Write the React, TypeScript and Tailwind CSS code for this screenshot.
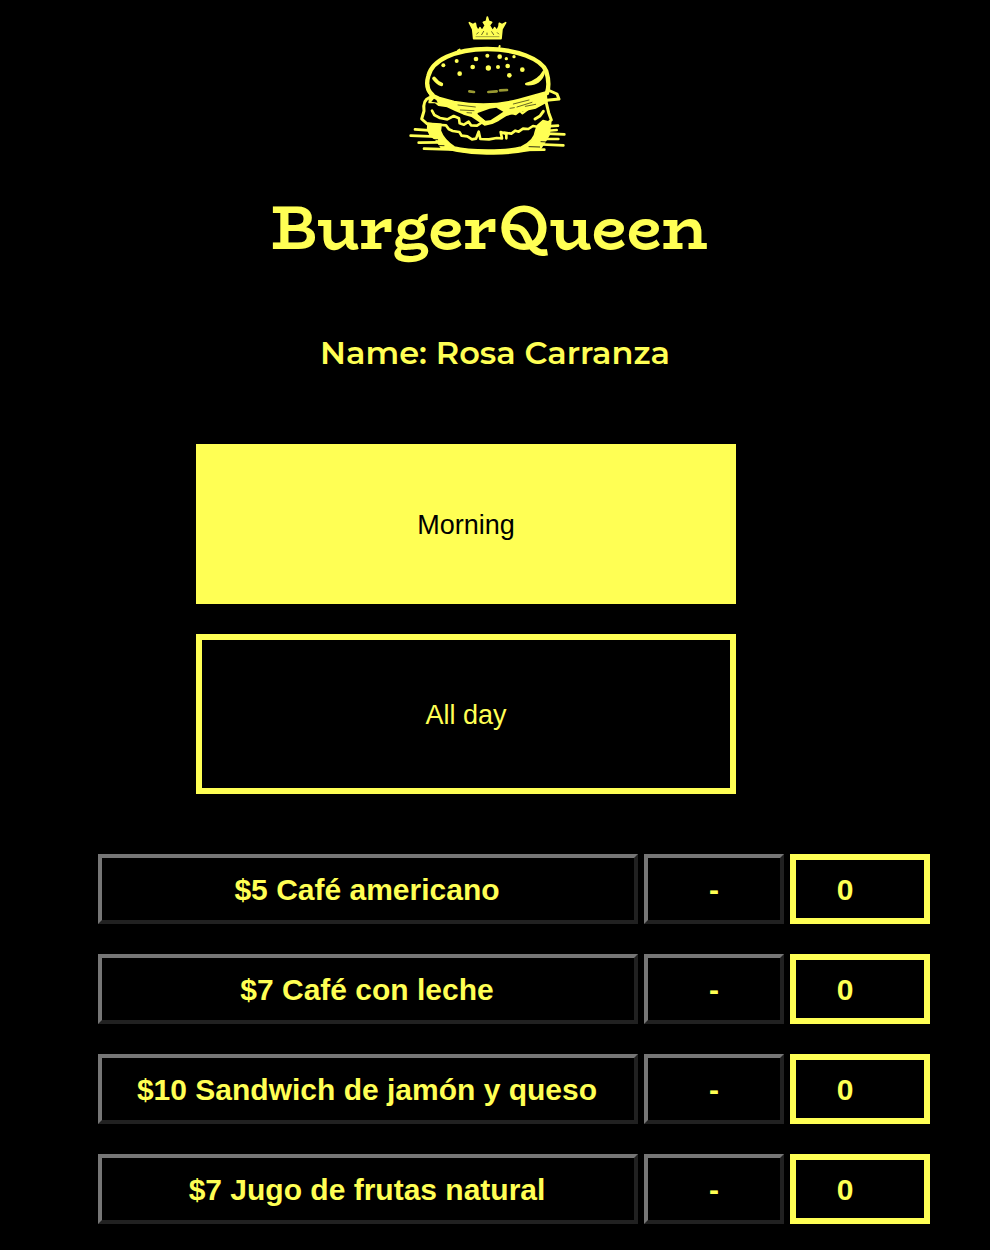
import { useState } from "react";

type Menu = "morning" | "allDay";

const products = [
  "$5 Café americano",
  "$7 Café con leche",
  "$10 Sandwich de jamón y queso",
  "$7 Jugo de frutas natural",
];

const seeds = [
  [133, 181, 6], [173, 168, 6], [182, 206, 7], [231, 162, 7], [221, 186, 7], [265, 152, 6],
  [268, 189, 8], [297, 186, 6], [302, 155, 7], [322, 161, 5], [326, 183, 7], [331, 211, 7],
  [345, 155, 5], [370, 194, 7],
];

function BurgerLogo() {
  return (
    <svg
      viewBox="0 0 540 480"
      role="img"
      aria-label="Burger with a crown"
      className="h-40 w-[180px] text-[#ffff54]"
      fill="none"
      stroke="currentColor"
      strokeLinecap="round"
      strokeLinejoin="round"
    >
      {/* crown */}
      <path
        d="M224 101 L221 72 L211 53 L222 59 L229 55 L231 66 L237 77 L243 68 L249 78 L259 61 L253 52 L262 49 L265 36 L269 49 L278 52 L271 61 L281 78 L287 68 L294 77 L300 64 L301 55 L309 59 L320 53 L309 72 L306 101 Z"
        fill="currentColor"
        strokeWidth="5"
      />
      <path d="M233 87 L238 83 M248 89 L254 79 M264 84 V89 M278 80 L284 89 M295 83 L299 87" stroke="#000" strokeWidth="3" opacity=".6" />
      <path d="M231 95 H300" stroke="#77772a" strokeWidth="2" />

      {/* top bun */}
      <path
        d="M100 269 C84 256 81 237 88 213 C99 166 166 133 264 132 C352 132 427 162 442 199 C450 226 450 246 444 264"
        strokeWidth="13"
      />
      <path d="M177 137 L182 134 M301 127 L302 123" strokeWidth="6" />
      <path d="M86 239 C86 253 92 266 102 273" strokeWidth="10" />
      <path d="M105 220 C112 229 118 235 127 238" strokeWidth="11" />
      <path d="M382 237 C410 239 430 226 435 199 C426 216 410 230 382 237 Z" fill="currentColor" strokeWidth="8" />
      <g fill="currentColor" stroke="none">
        {seeds.map(([x, y, r]) => (
          <ellipse key={`${x}-${y}`} cx={x} cy={y} rx={r} ry={r} />
        ))}
      </g>
      <path d="M211 259 L225 261 M268 261 L293 259 M303 256 L324 255" strokeWidth="8" opacity=".6" />

      {/* cheese under the bun */}
      <path
        d="M95 266 L121 278 L165 290 C234 302 302 300 359 284 L440 262 L443 290 L410 308 L381 314 L356 320 L322 330 L298 345 L279 354 L257 359 L238 346 L218 333 L194 326 L169 315 L145 304 L119 300 L108 291 L91 292 Z"
        fill="currentColor"
        strokeWidth="6"
      />
      <path d="M236 324 L272 311 L292 308 L313 320 L295 332 L274 346 L259 347 L235 330 Z" fill="#000" stroke="none" />
      <path d="M105 281 L112 285 L116 293 L97 290 Z" fill="#000" stroke="none" />
      <path d="M177 300 L229 306 M184 315 L225 317 M204 323 L218 324 M343 297 L390 285 M354 306 L399 292 M333 310 L346 308 M379 304 L410 298" stroke="#000" strokeWidth="3" opacity=".6" />
      <path d="M447 255 L474 267 L480 282 L443 286" strokeWidth="9" />

      {/* patty and lettuce */}
      <path d="M91 278 C76 283 73 302 75 318 L68 342 L85 357 L125 359" strokeWidth="9" />
      <path d="M99 317 L106 330 L123 339 L145 343 L164 333 L180 340 L182 355 L195 359 L209 350 L216 361 L234 362 L251 351" strokeWidth="8" />
      <path d="M226 324 L259 352 L281 350 L296 339 L320 328 L333 323 L350 327 L363 317 L370 325 L386 313" strokeWidth="7" />
      <path d="M441 290 L449 323 L457 345 L440 360 M433 319 L423 333 L408 342" strokeWidth="9" />
      <path
        d="M128 360 L141 361 L150 373 L161 378 L181 381 L188 392 L205 394 L219 403 L231 401 L239 380 L244 402 L270 403 L293 399 L309 400 L305 381 L322 387 L322 400 M315 383 L337 386 L349 377 L359 380 L372 371 L388 372 L402 363 L419 366 L433 351"
        strokeWidth="8"
      />

      {/* bottom bun and shading */}
      <path
        d="M87 354 L126 361 L124 377 C131 397 146 412 166 426 C211 438 324 438 367 426 C394 414 408 399 410 377 L415 362 L432 347 L455 353 L450 390 L435 415 L425 430 L383 437 C333 448 301 446 263 447 C218 447 188 441 171 438 L126 427 L112 405 L94 391 L86 373 Z"
        fill="currentColor"
        strokeWidth="5"
      />
      <path d="M48 373 L91 376 M35 392 L111 395 M59 413 L120 412 M75 431 L173 434 M444 364 L477 362 M438 378 L473 375 M444 386 L496 388 M436 402 L478 402 M399 417 L493 421 M364 435 L436 434" strokeWidth="8" />
      <path d="M81 403 L116 404 M93 421 L135 422 M426 410 L448 411 M390 425 L422 426" stroke="#000" strokeWidth="3" opacity=".8" />
    </svg>
  );
}

function ProductRow({ label }: { label: string }) {
  const [quantity, setQuantity] = useState(0);

  return (
    <li className="grid h-[70px] grid-cols-[minmax(0,1fr)_140px_140px] gap-[6px] text-[30px] leading-9 font-bold">
      <button
        type="button"
        onClick={() => setQuantity(quantity + 1)}
        className="border-4 border-t-[#767676] border-r-[#212121] border-b-[#212121] border-l-[#767676] pt-[2px] pr-[2px]"
      >
        {label}
      </button>
      <button
        type="button"
        aria-label={`- ${label}`}
        onClick={() => setQuantity(Math.max(0, quantity - 1))}
        className="border-4 border-t-[#767676] border-r-[#212121] border-b-[#212121] border-l-[#767676] pt-[2px]"
      >
        -
      </button>
      <input
        type="text"
        inputMode="numeric"
        readOnly
        aria-label={label}
        value={quantity}
        className="w-full min-w-0 border-[6px] border-[#ffff54] bg-black pt-[2px] pr-[30px] text-center outline-none"
      />
    </li>
  );
}

export default function App() {
  const [menu, setMenu] = useState<Menu>("morning");
  const selected = "bg-[#ffff54] text-black";
  const idle = "bg-black text-[#ffff54]";

  return (
    <main className="min-h-screen bg-black pb-[26px] font-['Liberation_Sans',Arial,sans-serif] text-[#ffff54]">
      <header className="flex flex-col items-center pt-[5px]">
        <div className="flex flex-col items-center pr-3">
          <BurgerLogo />
          <h1 className="mt-6 font-['BioRhyme','DejaVu_Serif',serif] text-[62px] leading-[76px] font-bold">
            BurgerQueen
          </h1>
        </div>
        <h2 className="mt-17 font-[Montserrat,Inter,sans-serif] text-[32px] leading-10 font-semibold">
          Name: Rosa Carranza
        </h2>
      </header>

      <div className="mt-[71px] flex flex-col gap-[30px] pr-[254px] pl-[196px] text-[27px] leading-8">
        <button
          type="button"
          aria-pressed={menu === "morning"}
          onClick={() => setMenu("morning")}
          className={`h-40 border-[6px] border-[#ffff54] pt-[2px] ${menu === "morning" ? selected : idle}`}
        >
          Morning
        </button>
        <button
          type="button"
          aria-pressed={menu === "allDay"}
          onClick={() => setMenu("allDay")}
          className={`h-40 border-[6px] border-[#ffff54] pt-[2px] ${menu === "allDay" ? selected : idle}`}
        >
          All day
        </button>
      </div>

      <ul className="mt-[60px] flex flex-col gap-[30px] pr-[60px] pl-[98px]">
        {products.map((label) => (
          <ProductRow key={label} label={label} />
        ))}
      </ul>
    </main>
  );
}
